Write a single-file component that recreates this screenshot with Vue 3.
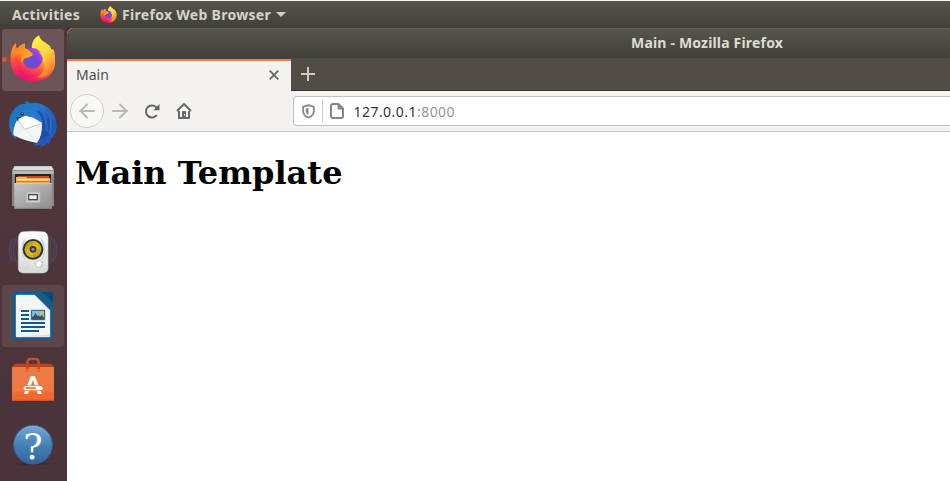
<script setup>
const apps = [
  { name: 'firefox', active: true, running: true },
  { name: 'thunderbird' },
  { name: 'files' },
  { name: 'rhythmbox' },
  { name: 'writer', active: true, soft: true },
  { name: 'software' },
  { name: 'help' },
]
</script>

<template>
  <div class="desktop">
    <svg class="defs" width="0" height="0" aria-hidden="true">
      <defs>
        <linearGradient id="fxBody" x1=".8" y1="0" x2=".35" y2="1">
          <stop offset="0" stop-color="#fff44f" /><stop offset=".35" stop-color="#ffb02b" />
          <stop offset=".62" stop-color="#ff5a35" /><stop offset="1" stop-color="#ee0878" />
        </linearGradient>
        <linearGradient id="fxTail" x1=".2" y1="0" x2=".7" y2="1">
          <stop offset="0" stop-color="#fff44f" /><stop offset=".5" stop-color="#ffd338" />
          <stop offset="1" stop-color="#ff702f" />
        </linearGradient>
        <radialGradient id="fxGlobe" cx=".35" cy=".7" r=".8">
          <stop offset="0" stop-color="#6054cf" /><stop offset=".5" stop-color="#7944d2" /><stop offset="1" stop-color="#b844ef" />
        </radialGradient>
        <linearGradient id="fxHead" x1="0" y1="0" x2="1" y2="1">
          <stop offset="0" stop-color="#ff751f" /><stop offset="1" stop-color="#ffb626" />
        </linearGradient>
        <linearGradient id="tbBlue" x1="0" y1="0" x2="1" y2="1">
          <stop offset="0" stop-color="#1a78b9" /><stop offset=".4" stop-color="#2377cc" /><stop offset=".72" stop-color="#2357bd" /><stop offset="1" stop-color="#1b62bb" />
        </linearGradient>
        <linearGradient id="steel" x1="0" y1="0" x2="1" y2="1">
          <stop offset="0" stop-color="#c6c6c6" /><stop offset="1" stop-color="#8c8c8c" />
        </linearGradient>
        <linearGradient id="speaker" x1="0" y1="0" x2="0" y2="1">
          <stop offset="0" stop-color="#fff" /><stop offset="1" stop-color="#d8d9d6" />
        </linearGradient>
        <linearGradient id="bag" x1="0" y1="0" x2="0" y2="1">
          <stop offset="0" stop-color="#e3703b" /><stop offset="1" stop-color="#f1682f" />
        </linearGradient>
        <linearGradient id="helpBlue" x1="0" y1="0" x2="0" y2="1">
          <stop offset="0" stop-color="#72a6d6" /><stop offset=".55" stop-color="#427eb5" /><stop offset="1" stop-color="#30679d" />
        </linearGradient>
        <symbol id="firefox" viewBox="32 23 136 140">
          <path fill="url(#fxBody)" d="M49 47Q48 57 52 65Q59 54 74 48Q72 58 79 65L132 68Q127 48 137 51Q167 65 166 105C164 140 137 162 101 162C61 162 33 134 33 99C32 76 38 58 49 47Z" />
          <path fill="url(#fxTail)" d="M118 24C120 39 138 45 151 56L153 64L162 68C167 86 167 108 158 123C150 141 133 152 113 149C129 138 135 124 133 107C130 90 109 84 99 69C91 55 102 31 118 24Z" />
          <circle cx="98" cy="93" r="31" fill="url(#fxGlobe)" />
          <path fill="url(#fxBody)" d="M51 69C59 56 66 51 75 48C73 58 78 65 83 66C91 72 98 77 100 81C96 87 87 90 81 91C68 94 69 107 77 114C86 127 102 130 114 124C124 119 132 109 133 98C141 121 127 145 101 151C68 155 39 126 51 69Z" />
          <path fill="url(#fxHead)" d="M49 48Q48 58 52 65Q61 54 75 48C73 59 79 66 85 68Q97 75 100 81C94 87 86 89 81 91C73 92 68 99 70 106C60 96 63 86 72 81C63 76 55 77 43 83Q38 63 49 48Z" />
          <path fill="#ffd338" d="M117 73Q132 76 136 92Q139 104 134 115Q134 91 117 73Z" />
        </symbol>
        <symbol id="thunderbird" viewBox="0 0 201 192">
          <path fill="url(#tbBlue)" d="M73 29Q88 26 91 34Q111 29 130 39Q163 55 170 93Q173 124 151 144L154 139L144 160L143 151Q134 162 119 166L123 157Q112 162 101 160L107 153L48 132L46 141Q28 122 27 96Q27 66 49 45Q61 34 79 35Z" />
          <path fill="#f5f5f7" d="M53 80Q67 69 82 73L126 94Q126 136 112 153Q76 148 41 130Q36 113 53 80Z" />
          <path fill="#fff" d="M55 79L72 111L128 93L100 75L78 71Z" />
          <path fill="none" stroke="#adb0b7" stroke-width="2" d="M53 83L74 112L126 94" />
          <path fill="none" stroke="#e4e5e9" stroke-width="2" d="M44 130L72 111M80 113L104 148" />
          <path fill="#2779cf" d="M79 53Q96 48 111 62Q129 77 128 94L100 77L76 71L53 80Q55 66 66 59Z" />
          <path fill="#1d50a5" d="M109 53Q123 71 128 90Q129 135 108 155L133 136L126 151L145 129Q161 102 153 78Q148 55 130 48Q145 67 145 85Q130 60 109 53Z" />
          <path fill="none" stroke="#2b6fc4" stroke-width="5" d="M113 46Q142 67 140 118M127 45Q164 74 148 126" />
          <path fill="none" stroke="#286fc2" stroke-width="3" d="M58 44Q47 49 41 65" />
          <ellipse cx="66" cy="66" rx="6" ry="5" fill="#23334c" /><circle cx="67" cy="64" r="2" fill="#d2c9bb" />
          <path fill="#173d78" d="M50 76L66 74L56 80L52 89Z" />
        </symbol>
        <symbol id="files" viewBox="0 0 201 192">
          <ellipse cx="99" cy="156" rx="60" ry="5" fill="#211d1f" opacity=".35" />
          <path fill="#858585" d="M36 43L43 30H155L162 43V150H36Z" />
          <path fill="#dedede" d="M38 42L44 31H154L161 42Z" />
          <path fill="#b6b6b6" d="M38 44H161V55H38Z" />
          <path fill="#252525" d="M45 54H153V85H45Z" />
          <path fill="#ca4a20" d="M53 60H147V85H53Z" />
          <path fill="#e66c29" d="M48 66H151V85H48Z" />
          <path fill="#f4b566" d="M48 63H79L83 67H150V84H48Z" />
          <path stroke="#fff0d0" stroke-width="3" d="M53 71H144" /><path stroke="#df772d" stroke-width="4" d="M49 77H150" />
          <path fill="url(#steel)" d="M43 81H156V159H43Z" /><path stroke="#d7d7d7" stroke-width="2" d="M43 83H156" />
          <path stroke="#727272" stroke-width="2" d="M43 157H156" />
          <rect x="79" y="108" width="41" height="32" rx="3" fill="#ccc" stroke="#b7b7b7" stroke-width="2" />
          <rect x="84" y="114" width="30" height="19" fill="#4c4c4c" /><rect x="88" y="118" width="22" height="11" fill="#eee" />
        </symbol>
        <symbol id="rhythmbox" viewBox="0 0 201 192">
          <path fill="none" stroke="#4e5c86" stroke-width="4" opacity=".45" d="M43 53Q24 89 43 125M52 49Q30 89 52 130M35 58Q21 89 35 120M151 49Q175 89 151 130M160 54Q181 89 160 125M143 46Q163 89 143 133" />
          <ellipse cx="99" cy="156" rx="42" ry="6" fill="#171819" opacity=".35" />
          <path fill="url(#speaker)" stroke="#c8c9c8" stroke-width="2" d="M64 36Q99 31 134 36Q143 39 144 54V146Q143 157 130 159H69Q56 158 55 147V54Q57 39 64 36Z" />
          <path fill="none" stroke="#cbd6e7" stroke-width="5" d="M75 57Q59 88 75 119M124 57Q143 88 124 119" />
          <circle cx="99" cy="88" r="31" fill="#313235" /><circle cx="99" cy="88" r="25" fill="#c9a817" />
          <path fill="#ead02e" d="M99 63A25 25 0 0 1 124 88L99 88ZM99 113A25 25 0 0 1 74 88H99Z" opacity=".55" />
          <circle cx="99" cy="88" r="20" fill="none" stroke="#ac8c15" stroke-width="1.5" /><circle cx="99" cy="88" r="10" fill="#303336" /><circle cx="99" cy="88" r="5" fill="#8d9090" />
          <circle cx="117" cy="132" r="10" fill="#fafafa" stroke="#b6b6b6" stroke-width="2" /><path fill="#c1c1c1" d="M123 123H128V141H119Q126 136 126 129Z" />
          <rect x="71" y="130" width="12" height="14" rx="3" fill="none" stroke="#d0d0d0" stroke-width="2" />
        </symbol>
        <symbol id="writer" viewBox="0 0 201 192">
          <path fill="#095f98" d="M46 24H107L158 76V160Q158 168 151 168H47Q39 168 39 161V31Q39 24 46 24Z" />
          <path fill="#f5f5f5" stroke="#fff" stroke-width="3" d="M49 34H104L149 79V158H49Z" />
          <path fill="#dedede" d="M104 34L149 79V158H52L148 151V81Z" />
          <path fill="#095f98" d="M111 24H152Q159 24 159 31V72Z" /><path fill="#064d7d" d="M126 24H153Q159 24 159 31V57Z" />
          <path stroke="#095e8e" stroke-width="6" d="M63 81H87M63 93H87M63 105H87M63 117H135M63 129H135M63 141H117" />
          <path fill="#82bddc" stroke="#095e8e" stroke-width="3" d="M94 79H134V107H94Z" /><circle cx="127" cy="86" r="5" fill="#e6bd2f" />
          <path fill="#4a4d4e" d="M96 106V98L101 97L106 87L112 96L117 94L120 99L125 93L132 101V106Z" />
        </symbol>
        <symbol id="software" viewBox="0 0 201 192">
          <ellipse cx="99" cy="157" rx="60" ry="5" fill="#21171b" opacity=".35" />
          <path fill="none" stroke="#c84e25" stroke-width="7" d="M82 57V44Q82 33 91 33H108Q116 33 116 44V57" />
          <path fill="#b8431f" d="M36 58L44 47H154L162 58Z" /><path fill="url(#bag)" d="M36 57H162V159H36Z" />
          <path fill="#f58951" opacity=".45" d="M36 57H162V130H36Z" />
          <path stroke="#f6874d" stroke-width="2" d="M36 129H162" /><path stroke="#ce4d22" stroke-width="3" d="M36 157H162" />
          <path fill="none" stroke="#c34621" stroke-width="6" d="M82 48V71M116 48V71" /><path stroke="#f3783f" stroke-width="4" d="M82 62V71M116 62V71" />
          <text x="99" y="137" class="bag-mark" text-anchor="middle">A</text>
          <rect x="68" y="112" width="63" height="17" fill="#ec7744" />
          <path fill="#fff" d="M77 114H121Q128 115 128 120.500Q128 126 121 127H77Q71 126 71 120.500Q71 115 77 114Z" />
          <path stroke="#e96d3a" stroke-width="5" d="M77 120H107" />
        </symbol>
        <symbol id="help" viewBox="0 0 201 192">
          <ellipse cx="99" cy="155" rx="44" ry="5" fill="#1b1b22" opacity=".25" />
          <circle cx="99" cy="98" r="58" fill="url(#helpBlue)" stroke="#36658e" stroke-width="3" />
          <path fill="none" stroke="#9bbdd9" stroke-width="2" opacity=".7" d="M51 72A55 55 0 0 1 147 72" />
          <text x="99" y="141" class="help-mark" text-anchor="middle">?</text>
        </symbol>
      </defs>
    </svg>

    <header class="topbar">
      <span class="activities">Activities</span>
      <svg class="app-icon"><use href="#firefox" /></svg>
      <span class="app-name">Firefox Web Browser</span>
      <svg class="caret" viewBox="0 0 10 5"><path fill="#d0cec8" d="M0 0H10L5 5Z" /></svg>
    </header>

    <div class="workspace">
      <nav class="dock">
        <div v-for="app in apps" :key="app.name" class="dock-item" :class="{ running: app.running }">
          <div class="tile" :class="{ active: app.active, soft: app.soft }">
            <svg :class="app.name === 'firefox' ? 'fx' : 'launcher'"><use :href="'#' + app.name" /></svg>
          </div>
        </div>
      </nav>

      <main class="window">
        <div class="titlebar"><span>Main - Mozilla Firefox</span></div>
        <div class="tabs">
          <div class="tab">
            <span class="tab-title">Main</span>
            <svg class="close" viewBox="0 0 10 10"><path d="M.7 .7L9.3 9.3M9.3 .7L.7 9.3" /></svg>
          </div>
          <svg class="plus" viewBox="0 0 14 14"><path d="M7 0V14M0 7H14" /></svg>
        </div>
        <div class="toolbar">
          <div class="back"><svg viewBox="0 0 16 16"><path d="M15 8H1M8 1.5L1.5 8L8 14.5" /></svg></div>
          <svg class="forward" viewBox="0 0 16 16"><path d="M1 8H15M8 1.5L14.5 8L8 14.5" /></svg>
          <svg class="reload" viewBox="0 0 16 16"><path d="M12.8 12A6 6 0 1 1 12.2 4.2L14 6" /><path class="solid" d="M15.5 1V7.2H9.3Z" /></svg>
          <svg class="home" viewBox="0 0 16 16"><path d="M1 8L8 1L15 8M3 8V14.9H13V8" /><path class="solid" d="M6 15V9Q6 8 7 8H9Q10 8 10 9V15Z" /><path fill="#f5f4f2" stroke="none" d="M8 11H9V12.5H8Z" /></svg>
          <div class="address">
            <svg class="shield" viewBox="0 0 14 16"><path d="M7 1.3Q10 1.8 12.8 3V7C12.8 11 10.5 13.5 7 14.7C3.5 13.5 1.2 11 1.2 7V3Q4 1.8 7 1.3Z" /><path class="solid" d="M7 4.2V11.8C4.8 10.8 4 9.2 4 7V5Q5.5 4.3 7 4.2Z" /></svg>
            <i class="separator"></i>
            <svg class="page-icon" viewBox="0 0 14 16"><path d="M3 1H8.5L13 5.5V13Q13 15 11 15H3Q1 15 1 13V3Q1 1 3 1ZM8.500 1V5.500H13" /></svg>
            <span class="url">127.0.0.1<span>:8000</span></span>
          </div>
        </div>
        <article class="page"><h1>Main Template</h1></article>
      </main>
    </div>
  </div>
</template>

<style>
body { margin: 0; overflow: hidden; }
</style>

<style scoped>
* { box-sizing: border-box; }
svg { display: block; flex: none; }
.defs { position: absolute; }
.bag-mark { font: 900 74px Lato, sans-serif; fill: #fff; }
.help-mark { font: 400 108px "DejaVu Serif", serif; fill: #fff; }
.desktop { width: 950px; height: 481px; background: #4b3438; font-family: "Noto Sans", sans-serif; overflow: hidden; }
.topbar { height: 28px; border-top: 1px solid #f4f4f2; background: linear-gradient(#57554d, #403f39); display: flex; align-items: center; padding-left: 12px; color: #d5d3cd; font-size: 14px; font-weight: 700; line-height: 20px; white-space: nowrap; }
.activities { width: 88px; letter-spacing: .3px; }
.app-icon { width: 17px; height: 17px; margin-right: 5px; }
.app-name { width: 154px; letter-spacing: .3px; }
.caret { width: 10px; height: 5px; }
.workspace { display: flex; height: 453px; background: #671631; }
.dock { width: 67px; background: linear-gradient(#51373b, #4a333b); flex: none; }
.dock-item { position: relative; width: 67px; height: 64px; padding: 1px 0 0 2px; }
.tile { display: flex; align-items: flex-start; width: 62px; height: 62px; border-radius: 3px; }
.tile.active { background: #6b5558; }
.tile.soft { background: #5c464b; }
.launcher { width: 67px; height: 64px; margin: -1px 0 0 -2px; }
.fx { width: 46px; height: 47px; margin: 6px 0 0 8px; }
.running::before { content: ""; position: absolute; left: 2px; top: 29px; width: 5px; height: 5px; background: #e95420; border-radius: 50%; }
.window { flex: 1; min-width: 0; border-radius: 6px 0 0; overflow: hidden; background: #fff; }
.titlebar { height: 30px; border-top: 1px solid #62604f; background: linear-gradient(#57554d, #403f39); padding-left: 564px; color: #dedbd2; font-size: 14px; font-weight: 700; line-height: 28px; letter-spacing: .18px; white-space: nowrap; }
.tabs { height: 33px; background: #504d46; display: flex; align-items: flex-start; border-bottom: 1px solid #383630; }
.tab { width: 224px; height: 33px; border-top: 1px solid #42413b; box-shadow: inset 0 2px #f27b50; background: #f4f3f2; display: flex; align-items: center; justify-content: space-between; padding: 0 12px 0 9px; flex: none; }
.tab-title { font-size: 14px; line-height: 20px; color: #4c4c4c; }
.close { width: 10px; height: 10px; fill: none; stroke: #666; stroke-width: 1.8; }
.plus { width: 14px; height: 14px; margin: 9px 0 0 10px; stroke: #cecbc2; stroke-width: 2; }
.toolbar { height: 41px; background: #f4f3f1; border-bottom: 1px solid #c8c7c4; display: flex; align-items: center; padding-left: 3px; }
.back { width: 34px; height: 34px; border: 1px solid #d1d0cd; border-radius: 50%; display: grid; place-items: center; background: #f8f8f7; }
.back svg, .forward { width: 16px; height: 16px; fill: none; stroke: #b8b8b7; stroke-width: 2; stroke-linecap: round; stroke-linejoin: round; }
.forward { margin-left: 8px; }
.reload { width: 16px; height: 16px; margin-left: 16px; fill: none; stroke: #666; stroke-width: 2; }
.home { width: 16px; height: 16px; margin-left: 16px; fill: none; stroke: #666; stroke-width: 2; stroke-linejoin: round; }
.solid { fill: #666; stroke: none; }
.address { height: 30px; flex: 1; margin-left: 101px; border: 1px solid #c1c0bd; border-right: 0; border-radius: 4px 0 0 4px; background: #fff; display: flex; align-items: center; padding-left: 8px; }
.shield { width: 13px; height: 15px; fill: none; stroke: #898989; stroke-width: 2; }
.shield .solid { fill: #898989; }
.separator { width: 1px; height: 22px; background: #ccc; margin-left: 7px; }
.page-icon { width: 14px; height: 16px; margin-left: 7px; fill: none; stroke: #858585; stroke-width: 2; stroke-linejoin: round; }
.url { margin-left: 9.5px; padding-top: 2px; font-size: 14px; line-height: 22px; color: #333; letter-spacing: .46px; }
.url span { color: #969696; }
.page { padding: 22px 8px 0; }
h1 { margin: 0; font: 700 32px/38px "DejaVu Serif", serif; color: #000; white-space: nowrap; }
</style>
